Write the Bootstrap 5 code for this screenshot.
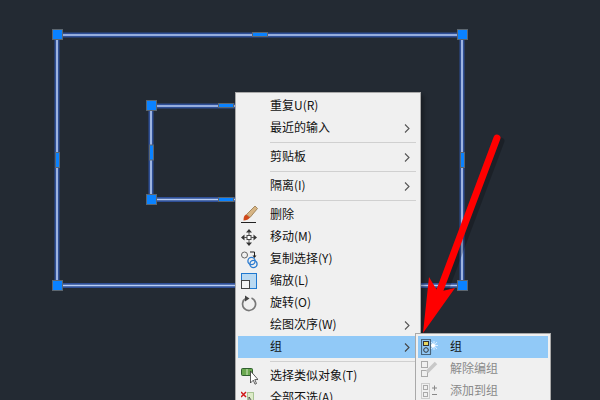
<!DOCTYPE html>
<html lang="zh">
<head>
<meta charset="utf-8">
<title>CAD</title>
<link rel="stylesheet" href="https://cdn.jsdelivr.net/npm/bootstrap@5.3.0/dist/css/bootstrap.min.css">
<style>
html,body{margin:0;width:600px;height:400px;overflow:hidden;background:#232a33}
.stage{position:relative;width:600px;height:400px;overflow:hidden;font-family:"Noto Sans CJK SC","Liberation Sans",sans-serif}
.layer{position:absolute;left:0;top:0}
.ctx{position:absolute;background:#f0f0f0;border:1px solid #a9a9a9;margin:0;list-style:none;font-size:12px;color:#111;box-shadow:3px 3px 4px rgba(0,0,0,.3)}
.ctx-main{left:235px;top:92px;width:186px;padding:2px}
.ctx-sub{left:415px;top:333px;width:136px;height:80px;padding:2px;box-shadow:none}
.entry{height:22px;line-height:22px;display:flex;align-items:center}
.gutter{width:32px;flex:none;height:22px;display:flex;align-items:center;padding-left:3px}
.lbl{flex:1;white-space:nowrap;margin-top:-2px}
.entry.on{background:#91c9f7}
.entry.off{color:#8a8a8a}
.chev{width:14px;flex:none;display:flex;align-items:center}
.sep{height:1px;background:#d0d0d0;margin:3px 2px 3px 32px}
</style>
</head>
<body>
<div class="stage">
<svg class="layer" width="600" height="400" viewBox="0 0 600 400">
 <g fill="none" stroke-linecap="square">
  <g stroke="#2f4f96" stroke-width="5">
   <path d="M57 35H462V285.500H57Z"/><path d="M236 106H151V199.500H236"/>
  </g>
  <g stroke="#b9cdf3" stroke-width="1.600">
   <path d="M57 35H462V285.500H57Z"/><path d="M236 106H151V199.500H236"/>
  </g>
 </g>
 <g fill="#0a82ff" stroke="#5c6670" stroke-width="1">
  <rect x="52.500" y="29.500" width="10" height="10"/><rect x="457.500" y="29.500" width="10" height="10"/>
  <rect x="52.500" y="280.500" width="10" height="10"/><rect x="457.500" y="280.500" width="10" height="10"/>
  <rect x="146.500" y="100.500" width="10" height="10"/><rect x="146.500" y="194.500" width="10" height="10"/>
  <rect x="252.500" y="32.500" width="15" height="4"/>
  <rect x="55.500" y="152.500" width="4" height="15"/><rect x="460.500" y="152.500" width="4" height="15"/>
  <rect x="149.500" y="145" width="4" height="15"/>
  <rect x="218.500" y="103.500" width="15" height="4"/><rect x="218.500" y="197.500" width="15" height="4"/>
 </g>
</svg>

<div class="ctx ctx-main">
 <div class="entry"><span class="gutter"></span><span class="lbl">重复U(R)</span></div>
 <div class="entry"><span class="gutter"></span><span class="lbl">最近的输入</span><span class="chev"><svg width="6" height="9" viewBox="0 0 6 9"><path d="M1 .5 5 4.500 1 8.500" fill="none" stroke="#555" stroke-width="1.100"/></svg></span></div>
 <div class="sep"></div>
 <div class="entry"><span class="gutter"></span><span class="lbl">剪贴板</span><span class="chev"><svg width="6" height="9" viewBox="0 0 6 9"><path d="M1 .5 5 4.500 1 8.500" fill="none" stroke="#555" stroke-width="1.100"/></svg></span></div>
 <div class="sep"></div>
 <div class="entry"><span class="gutter"></span><span class="lbl">隔离(I)</span><span class="chev"><svg width="6" height="9" viewBox="0 0 6 9"><path d="M1 .5 5 4.500 1 8.500" fill="none" stroke="#555" stroke-width="1.100"/></svg></span></div>
 <div class="sep"></div>
 <div class="entry"><span class="gutter"><svg width="17" height="18" viewBox="0 0 17 18"><path d="M14 0 5.500 8.500l3.500 3L16.500 2.500z" fill="#d6b483" stroke="#8a6a3c" stroke-width=".7"/><path d="M5 8.500C3 9.500 2.500 11.500 2.500 14.500c3 0 5-1 6.500-3z" fill="#d0481a"/><path d="M0 16.500h15" stroke="#222" stroke-width="1"/></svg></span><span class="lbl">删除</span></div>
 <div class="entry"><span class="gutter"><svg width="16" height="17" viewBox="0 0 16 17"><g fill="#333"><path d="M8 0 11 3.500H5zM8 17 5 13.500h6zM0 8.500 3.500 5.500v6zM16 8.500 12.500 11.500v-6z"/></g><rect x="6" y="6.500" width="4" height="4" fill="#fff" stroke="#444"/><path d="M3 8.500h3M10 8.500h3M8 3v3.500M8 10.500V14" stroke="#555"/></svg></span><span class="lbl">移动(M)</span></div>
 <div class="entry"><span class="gutter"><svg width="17" height="19" viewBox="0 0 17 19" fill="none"><circle cx="3.500" cy="5" r="3" stroke="#666"/><circle cx="10.500" cy="11" r="3.600" stroke="#2b7bd0" stroke-width="1.300"/><circle cx="12.500" cy="14" r="3.600" stroke="#2b7bd0" stroke-width="1.300"/><path d="M9 2h4.500V6" stroke="#222"/><path d="M11.500 5.500h4l-2 2.500z" fill="#222"/></svg></span><span class="lbl">复制选择(Y)</span></div>
 <div class="entry"><span class="gutter"><svg width="16" height="16" viewBox="0 0 16 16" fill="none"><rect x=".5" y=".5" width="15" height="15" fill="#b9d9f2" stroke="#1f78cf"/><rect x=".5" y="7.500" width="8" height="8" fill="#f4f4f4" stroke="#444"/></svg></span><span class="lbl">缩放(L)</span></div>
 <div class="entry"><span class="gutter"><svg width="16" height="17" viewBox="0 0 16 17" fill="none"><path d="M10.500 3A6.500 6.500 0 1 1 5 3.300" stroke="#777" stroke-width="1.700"/><path d="M4 .5 8.500 3.500 4 6.500z" fill="#444"/></svg></span><span class="lbl">旋转(O)</span></div>
 <div class="entry"><span class="gutter"></span><span class="lbl">绘图次序(W)</span><span class="chev"><svg width="6" height="9" viewBox="0 0 6 9"><path d="M1 .5 5 4.500 1 8.500" fill="none" stroke="#555" stroke-width="1.100"/></svg></span></div>
 <div class="entry on"><span class="gutter"></span><span class="lbl">组</span><span class="chev"><svg width="6" height="9" viewBox="0 0 6 9"><path d="M1 .5 5 4.500 1 8.500" fill="none" stroke="#444" stroke-width="1.100"/></svg></span></div>
 <div class="sep"></div>
 <div class="entry"><span class="gutter"><svg width="17" height="18" viewBox="0 0 17 18"><rect x=".5" y="1.500" width="11" height="7" rx="1" fill="#6aa84f" stroke="#2f5f2f"/><path d="M6 2v6" stroke="#cfe6c0"/><path d="M9.500 4v12l2.800-2.800 1.700 4 1.500-.7-1.700-3.900 3.200-.1z" fill="#fff" stroke="#333" stroke-width=".8"/></svg></span><span class="lbl">选择类似对象(T)</span></div>
 <div class="entry"><span class="gutter"><svg width="17" height="17" viewBox="0 0 17 17"><path d="M0 2l5 5M5 2 0 7" stroke="#d01818" stroke-width="1.500"/><rect x="6.500" y="2.500" width="6" height="10" fill="#dcebc8" stroke="#6a9a4a" stroke-dasharray="1 1"/><path d="M8 7v10l2.500-2.500 3 .5z" fill="#fff" stroke="#333" stroke-width=".8"/></svg></span><span class="lbl">全部不选(A)</span></div>
</div>

<div class="ctx ctx-sub">
 <div class="entry on"><span class="gutter"><svg width="18" height="16" viewBox="0 0 18 16" fill="none"><rect x=".5" y=".5" width="9" height="15" stroke="#000" stroke-width="1.200" stroke-dasharray="1 1"/><rect x="2.500" y="2.500" width="5" height="4" fill="#e8d860" stroke="#333"/><circle cx="5" cy="11" r="2.300" stroke="#333"/><path d="M10 6.500h7M13 2v9M10 3l6 7M16 3l-6 7" stroke="#d8ecff"/><circle cx="12" cy="6.500" r="2" fill="#fff"/></svg></span><span class="lbl">组</span></div>
 <div class="entry off"><span class="gutter"><svg width="17" height="16" viewBox="0 0 17 16" fill="none" stroke="#aaa"><rect x=".5" y=".5" width="6" height="6"/><rect x=".5" y="9.500" width="6" height="6"/><path d="M6 11 15 2" stroke-width="3.500" stroke="#c8c8c8"/></svg></span><span class="lbl">解除编组</span></div>
 <div class="entry off"><span class="gutter"><svg width="17" height="16" viewBox="0 0 17 16" fill="none" stroke="#aaa"><rect x=".5" y=".5" width="8" height="15" stroke-dasharray="1 1"/><rect x="2.500" y="2.500" width="4" height="4"/><rect x="2.500" y="9.500" width="4" height="4"/><path d="M11 5h5M13.500 2.500v5M11 11.500h5" stroke="#888"/></svg></span><span class="lbl">添加到组</span></div>
</div>

<svg class="layer" width="600" height="400" viewBox="0 0 600 400">
 <path d="M497 138 437 298" stroke="rgba(0,0,0,.22)" stroke-width="7" stroke-linecap="round" transform="translate(4 3)"/>
 <path d="M497 138 437 298" stroke="#f00" stroke-width="7" stroke-linecap="round" fill="none"/>
 <path d="M423 333 429 277 438 292 455 288Z" fill="#f00"/>
</svg>
</div>
<script src="https://cdn.jsdelivr.net/npm/bootstrap@5.3.0/dist/js/bootstrap.bundle.min.js"></script>
</body>
</html>
